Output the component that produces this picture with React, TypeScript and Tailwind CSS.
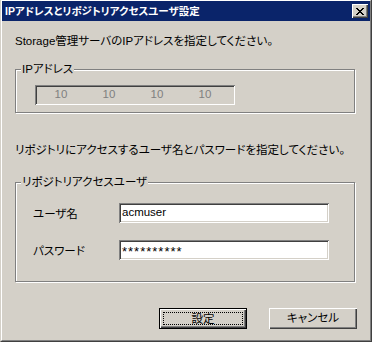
const sunken =
  "shadow-[inset_1px_1px_0_#808080,inset_-1px_-1px_0_#ffffff,inset_2px_2px_0_#404040,inset_-2px_-2px_0_#d4d0c8]";
const raised =
  "shadow-[inset_1px_1px_0_#ffffff,inset_-1px_-1px_0_#404040,inset_-2px_-2px_0_#808080]";
const etched = "border border-[#808080] shadow-[1px_1px_0_#ffffff,inset_1px_1px_0_#ffffff]";

const CloseGlyph = () => (
  <svg width="8" height="7" viewBox="0 0 8 7" shapeRendering="crispEdges">
    <path
      fill="#000"
      d="M0 0h2v1H0zM6 0h2v1H6zM1 1h2v1H1zM5 1h2v1H5zM2 2h4v1H2zM3 3h2v1H3zM2 4h4v1H2zM1 5h2v1H1zM5 5h2v1H5zM0 6h2v1H0zM6 6h2v1H6z"
    />
  </svg>
);

const GroupBox = ({ title, className, children }: { title: string; className: string; children: React.ReactNode }) => (
  <div className={`relative w-[340px] ${etched} ${className}`}>
    <span className="absolute left-[5px] -top-[8px] px-[1px] bg-[#d4d0c8] leading-[14px]">{title}</span>
    {children}
  </div>
);

const Field = ({ label, value, secret }: { label: string; value: string; secret?: boolean }) => (
  <div className="flex items-center">
    <span className="w-[103px] pl-[17px] mt-[4px]">{label}</span>
    <div className={`w-[210px] h-[20px] bg-white pl-[3px] flex items-center ${sunken}`}>
      <span className={secret ? "text-[13px] tracking-[1px] leading-[13px] mt-[3px]" : ""}>{value}</span>
    </div>
  </div>
);

export default function App() {
  return (
    <div className="w-[372px] h-[342px] bg-[#d4d0c8] border-l border-r border-b border-l-[#d4d0c8] border-r-[#404040] border-b-[#404040] font-['Liberation_Sans','Noto_Sans_CJK_JP',sans-serif] text-[11.5px] text-black [font-feature-settings:'palt']">
      <div className="h-full flex flex-col border-l border-t border-r border-b border-l-white border-t-white border-r-[#808080] border-b-[#808080]">
        <div className="h-[20px] bg-[#0a246a] flex items-center justify-between pl-[3px] pr-[2px]">
          <span className="text-white font-bold text-[10.5px] leading-[14px]">IPアドレスとリポジトリアクセスユーザ設定</span>
          <div className={`w-[16px] h-[14px] bg-[#d4d0c8] flex items-center justify-center ${raised}`}>
            <CloseGlyph />
          </div>
        </div>

        <div className="flex flex-col px-[13px]">
          <p className="mt-[13px] leading-[14px] whitespace-nowrap">Storage管理サーバのIPアドレスを指定してください。</p>

          <GroupBox title="IPアドレス" className="mt-[21px] pt-[15px] pb-[7px] pl-[19px]">
            <div className={`w-[200px] h-[20px] pl-[2px] grid grid-cols-[repeat(4,48px)] items-center text-[#808080] ${sunken}`}>
              <span className="text-center">10</span>
              <span className="text-center">10</span>
              <span className="text-center">10</span>
              <span className="text-center">10</span>
            </div>
          </GroupBox>

          <p className="mt-[30px] leading-[14px] whitespace-nowrap">リポジトリにアクセスするユーザ名とパスワードを指定してください。</p>

          <GroupBox title="リポジトリアクセスユーザ" className="mt-[25px] h-[100px] pt-[19px] flex flex-col gap-[16px]">
            <Field label="ユーザ名" value="acmuser" />
            <Field label="パスワード" value="**********" secret />
          </GroupBox>

          <div className="mt-[26px] flex justify-end gap-[22px]">
            <button className="w-[88px] h-[21px] border border-black p-[3px] flex shadow-[inset_1px_1px_0_#ffffff,inset_-1px_-1px_0_#404040,inset_-2px_-2px_0_#808080]">
              <span className="flex-1 border border-dotted border-black flex items-center justify-center leading-[12px]">設定</span>
            </button>
            <button className={`w-[88px] h-[21px] flex items-center justify-center ${raised}`}>キャンセル</button>
          </div>
        </div>
      </div>
    </div>
  );
}
